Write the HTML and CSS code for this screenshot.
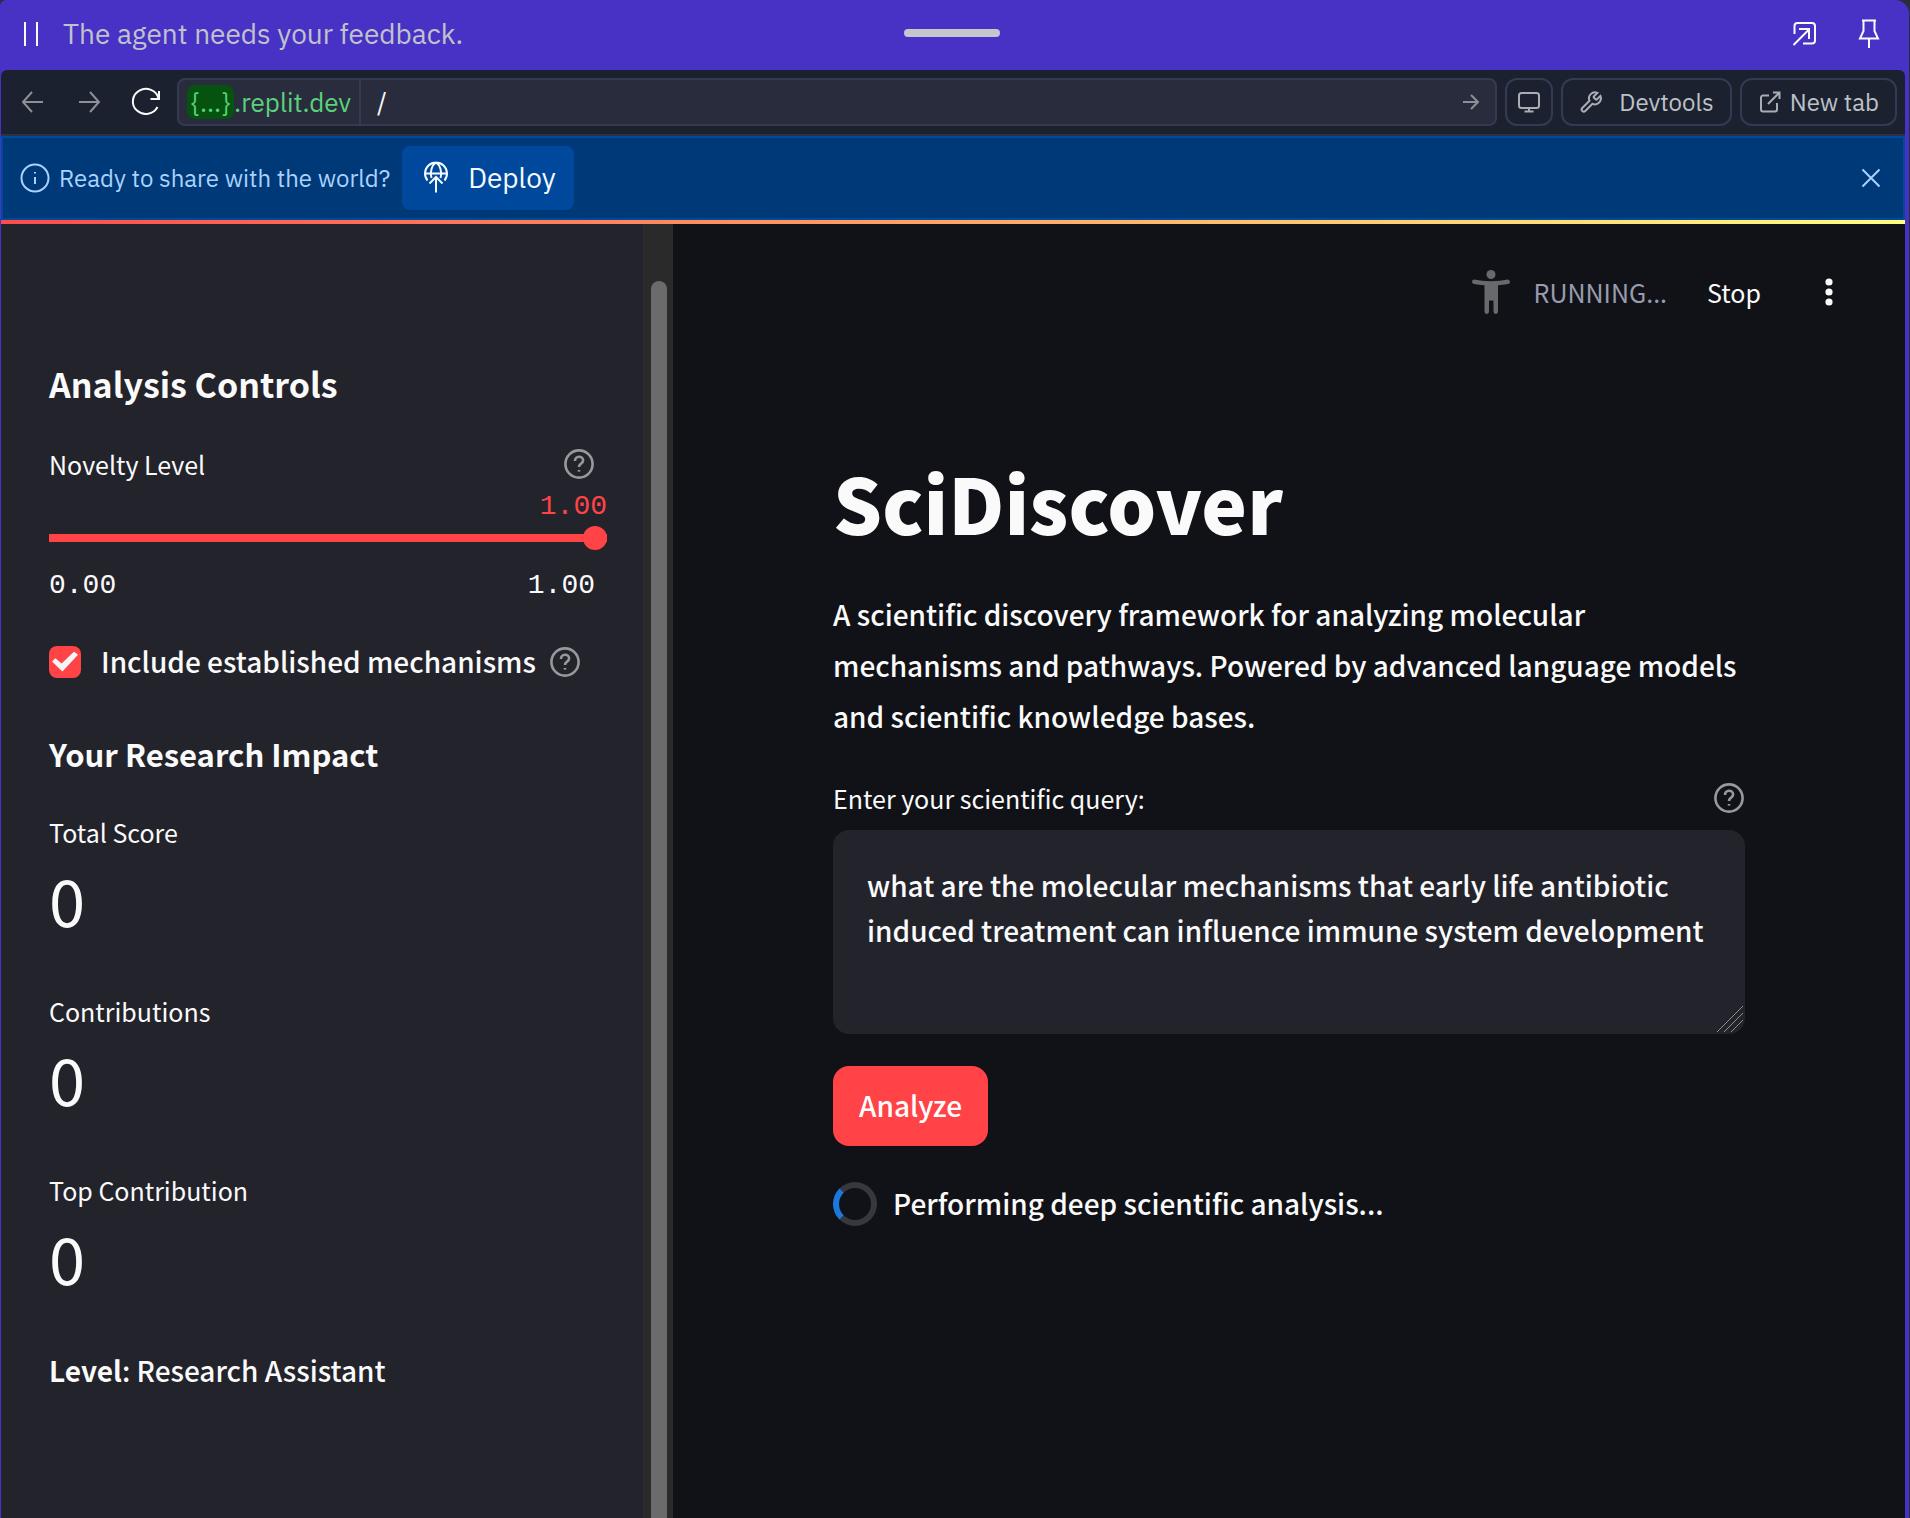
FILE: index.html
```html
<!DOCTYPE html>
<html lang="en">
<head>
<meta charset="utf-8">
<title>SciDiscover</title>
<link rel="stylesheet" href="styles.css">
</head>
<body>
<svg class="defs" width="0" height="0" aria-hidden="true">
  <symbol id="help" viewBox="0 0 30 30">
    <circle cx="15" cy="15" r="13.6"/>
    <path d="M11 12c0-2.600 1.700-4.200 4-4.200s4.100 1.500 4.100 3.700c0 2.900-4.100 3.200-4.100 6.500"/>
    <path d="M15 21v1.600"/>
  </symbol>
</svg>
<div class="window">
  <header class="agent-bar">
    <div class="agent-status">
      <svg class="icon" width="24" height="24" viewBox="0 0 24 24" aria-hidden="true"><path d="M6 0v24M18 0v24"/></svg>
      <p class="agent-text">The agent needs your feedback.</p>
    </div>
    <span class="grip"></span>
    <div class="agent-actions">
      <button class="plain" type="button" aria-label="Expand"><svg class="icon" width="32" height="32" viewBox="0 0 32 32"><path d="M5.500 16V8a3 3 0 0 1 3-3h14.500a3 3 0 0 1 3 3v14.500a3 3 0 0 1-3 3H14M4.500 27L19.500 12M10 11h10v10"/></svg></button>
      <button class="plain" type="button" aria-label="Pin"><svg class="icon" width="32" height="32" viewBox="0 0 32 32"><path d="M9 2.500h14M10.500 2.500v10.500l-3.500 7.500h18l-3.500-7.500V2.500M16 20.500V30"/></svg></button>
    </div>
  </header>

  <div class="frame">
    <nav class="toolbar">
      <button class="plain muted" type="button" aria-label="Back"><svg class="icon" width="32" height="32" viewBox="0 0 32 32"><path d="M26 16H6M15 6L6 16l9 10"/></svg></button>
      <button class="plain muted" type="button" aria-label="Forward"><svg class="icon" width="32" height="32" viewBox="0 0 32 32"><path d="M6 16h20M17 6l9 10-9 10"/></svg></button>
      <button class="plain reload" type="button" aria-label="Reload"><svg class="icon" width="32" height="32" viewBox="0 0 32 32"><path d="M30 5v8h-8.500M29.500 12.500A13 12.500 0 1 0 28.500 21"/></svg></button>
      <div class="address">
        <span class="domain"><span class="sub">{...}</span>.replit.dev</span>
        <input class="path" type="text" value="/" aria-label="Path">
        <button class="plain muted go" type="button" aria-label="Go"><svg class="icon" width="24" height="24" viewBox="0 0 24 24"><path d="M4 12h15M12 5l7 7-7 7"/></svg></button>
      </div>
      <button class="tool square" type="button" aria-label="Screen size"><svg class="icon" width="24" height="24" viewBox="0 0 24 24"><rect x="2" y="3" width="20" height="15" rx="2.500"/><path d="M12 18v3.500M7.500 21.500h9"/></svg></button>
      <button class="tool wide" type="button"><svg class="icon" width="24" height="24" viewBox="0 0 24 24"><path d="M15 6.300a1 1 0 0 0 0 1.400l1.600 1.600a1 1 0 0 0 1.400 0l3.400-3.400a6 6 0 0 1-7.900 7.900l-7.200 7.200a2.120 2.120 0 0 1-3-3l7.200-7.200a6 6 0 0 1 7.900-7.900z"/></svg>Devtools</button>
      <button class="tool" type="button"><svg class="icon" width="24" height="24" viewBox="0 0 24 24"><path d="M19 13v6.500a2 2 0 0 1-2 2H5a2 2 0 0 1-2-2v-12a2 2 0 0 1 2-2h6M15 2.500h6.500V9M21.500 2.500L10 14"/></svg>New tab</button>
    </nav>

    <div class="banner">
      <svg class="icon" width="32" height="32" viewBox="0 0 32 32" aria-hidden="true"><circle cx="16" cy="16" r="13.500"/><path d="M16 15v7M16 10v1.500"/></svg>
      <p class="banner-text">Ready to share with the world?</p>
      <button class="deploy" type="button"><svg class="icon" width="32" height="32" viewBox="0 0 32 32"><path d="M7.500 19.500a11 11 0 1 1 17 0M5 12.500h22M11.500 17C9.500 11 12 4 16 1.500C20 4 22.500 11 20.500 17M16 31.500V16M9.500 22.500L16 16l6.500 6.500"/></svg>Deploy</button>
      <button class="plain close" type="button" aria-label="Close"><svg class="icon" width="24" height="24" viewBox="0 0 24 24"><path d="M3.500 3.500l17 17M20.500 3.500l-17 17"/></svg></button>
    </div>

    <div class="rainbow"></div>

    <div class="app">
      <aside class="sidebar">
        <h2 class="h-controls">Analysis Controls</h2>
        <div class="label-row">
          <label for="novelty">Novelty Level</label>
          <svg class="help" width="30" height="30" aria-hidden="true"><use href="#help"/></svg>
        </div>
        <div class="slider">
          <output class="value" for="novelty">1.00</output>
          <input id="novelty" type="range" min="0" max="1" step="0.01" value="1">
          <div class="ticks"><span>0.00</span><span>1.00</span></div>
        </div>
        <div class="check-row">
          <input id="established" type="checkbox" checked>
          <label for="established">Include established mechanisms</label>
          <svg class="help" width="30" height="30" aria-hidden="true"><use href="#help"/></svg>
        </div>
        <h3 class="h-impact">Your Research Impact</h3>
        <dl class="metrics">
          <div class="metric"><dt>Total Score</dt><dd>0</dd></div>
          <div class="metric"><dt>Contributions</dt><dd>0</dd></div>
          <div class="metric"><dt>Top Contribution</dt><dd>0</dd></div>
        </dl>
        <p class="level"><strong>Level</strong>: Research Assistant</p>
      </aside>
      <div class="scroll-track"><div class="scroll-thumb"></div></div>

      <main class="main">
        <div class="status">
          <svg class="runner" width="38" height="44" viewBox="0 0 38 44" aria-hidden="true"><circle cx="19" cy="4.500" r="4.500"/><path d="M2 9.500Q10 11.300 19 11.300T36 9.500Q38 10 38 12T36 14Q31 15 26 15.300V42Q25.500 44 23.800 44T21.500 42V30.500H17V42Q16.500 44 14.700 44T12.500 42V15.300Q7 15 2 14Q0 13.500 0 11.800T2 9.500Z"/></svg>
          <span class="running">RUNNING...</span>
          <button class="plain stop" type="button">Stop</button>
          <button class="plain more" type="button" aria-label="Menu"><svg width="32" height="32" viewBox="0 0 32 32"><circle cx="16" cy="6" r="3.600"/><circle cx="16" cy="16" r="3.600"/><circle cx="16" cy="26" r="3.600"/></svg></button>
        </div>
        <div class="content">
          <h1>SciDiscover</h1>
          <p class="intro">A scientific discovery framework for analyzing molecular mechanisms and pathways. Powered by advanced language models and scientific knowledge bases.</p>
          <div class="label-row">
            <label for="query">Enter your scientific query:</label>
            <svg class="help" width="30" height="30" aria-hidden="true"><use href="#help"/></svg>
          </div>
          <div class="query-box">
            <textarea id="query">what are the molecular mechanisms that early life antibiotic induced treatment can influence immune system development</textarea>
            <svg class="resizer" width="28" height="28" viewBox="0 0 28 28" aria-hidden="true"><path d="M1 27L27 1M8 27L27 8M15 27L27 15"/></svg>
          </div>
          <button class="analyze" type="button">Analyze</button>
          <div class="progress"><span class="spinner"></span><span class="progress-text">Performing deep scientific analysis...</span></div>
        </div>
      </main>
    </div>
  </div>
</div>
</body>
</html>
```

FILE: styles.css
```css
* { box-sizing: border-box; }

body {
  margin: 0;
  background: #2b2d3a;
  color: #fafafa;
  font-family: "Noto Sans CJK SC", "Noto Sans", sans-serif;
  font-size: 28px;
  font-weight: 500;
}

h1, h2, h3, p, dl, dd { margin: 0; }

button, input, textarea { font: inherit; color: inherit; }

button { cursor: pointer; }

.defs { position: absolute; }

.window {
  display: flex;
  flex-direction: column;
  min-height: 100vh;
  margin-right: 1px;
  background: #4832c5;
  border-radius: 6px 14px 0 0;
}

.icon {
  flex: none;
  fill: none;
  stroke: currentColor;
  stroke-width: 2;
}

.plain {
  display: flex;
  align-items: center;
  justify-content: center;
  padding: 0;
  border: 0;
  background: none;
}

.muted { color: #8c9196; }

/* Agent bar */
.agent-bar {
  display: grid;
  grid-template-columns: 1fr auto 1fr;
  align-items: center;
  height: 70px;
  padding: 0 24px 3px 19px;
  font-family: "IBM Plex Sans", Roboto, sans-serif;
  font-weight: 400;
}

.agent-status {
  display: flex;
  align-items: center;
  gap: 20px;
}

.agent-text {
  color: #c0c2cc;
  font-size: 28px;
  line-height: 36px;
}

.grip {
  width: 96px;
  height: 8px;
  margin-bottom: 2px;
  border-radius: 4px;
  background: #c2c8cc;
}

.agent-actions {
  display: flex;
  justify-content: flex-end;
  gap: 32px;
}

/* Browser frame */
.frame {
  display: flex;
  flex: 1;
  flex-direction: column;
  margin: 0 4px 0 1px;
}

.toolbar {
  display: flex;
  align-items: center;
  gap: 8px;
  height: 66px;
  padding: 0 8px;
  border-bottom: 2px solid #2b3245;
  border-radius: 6px 6px 0 0;
  background: #1c2130;
  font-family: "IBM Plex Sans", Roboto, sans-serif;
  font-size: 24px;
  font-weight: 400;
}

.toolbar > .plain { width: 48px; }

.address {
  display: flex;
  flex: 1;
  align-items: center;
  height: 48px;
  border: 2px solid #353a52;
  border-radius: 8px;
  background: #282c3c;
  font-size: 26px;
}

.domain {
  display: flex;
  align-items: center;
  height: 44px;
  padding: 0 8px;
  border-right: 2px solid #353a52;
  color: #5ad27a;
}

.sub {
  padding: 0 4px;
  border-radius: 8px;
  background: #06530f;
  line-height: 34px;
}

.path {
  flex: 1;
  min-width: 0;
  padding: 0 16px;
  border: 0;
  outline: 0;
  background: none;
  color: #f5f7fa;
}

.go { width: 48px; }

.tool {
  display: flex;
  align-items: center;
  justify-content: center;
  gap: 8px;
  height: 48px;
  padding: 0 16px;
  border: 2px solid #353a52;
  border-radius: 12px;
  background: none;
  color: #bcc2c8;
}

.tool .icon { color: #a9adb5; }

.tool.wide { gap: 16px; }

.tool.square { width: 48px; padding: 0; }

/* Deploy banner */
.banner {
  display: flex;
  align-items: center;
  height: 84px;
  padding: 0 20px 0 16px;
  border: 2px solid #004a9c;
  background: #003978;
  color: #a8d2ff;
  font-family: "IBM Plex Sans", Roboto, sans-serif;
  font-weight: 400;
}

.banner-text {
  margin: 0 12px 0 8px;
  font-size: 24px;
}

.deploy {
  display: flex;
  align-items: center;
  gap: 16px;
  height: 64px;
  padding: 0 18px 2px;
  border: 0;
  border-radius: 8px;
  background: #00489c;
  color: #f5f9fc;
  font-size: 28px;
}

.close { margin-left: auto; }

.rainbow {
  height: 4px;
  background: linear-gradient(90deg, #ff4b4b, #fffd80);
}

/* App */
.app {
  display: flex;
  flex: 1;
}

.sidebar {
  width: 642px;
  padding: 130px 48px 48px;
  background: #23232c;
}

.h-controls {
  font-size: 34px;
  line-height: 60px;
}

.label-row {
  display: flex;
  align-items: center;
  justify-content: space-between;
  height: 36px;
  padding-right: 1px;
  font-size: 25px;
  font-weight: 400;
  line-height: 36px;
}

.help {
  flex: none;
  fill: none;
  stroke: #97989d;
  stroke-width: 2.600;
}

.sidebar .label-row { margin-top: 32px; }

.slider {
  width: 558px;
  font-family: "Liberation Mono", monospace;
  font-size: 28px;
  font-weight: 400;
}

.value {
  display: block;
  padding-top: 6px;
  color: #ff4346;
  line-height: 38px;
  text-align: right;
}

.slider input {
  display: block;
  width: 100%;
  height: 24px;
  margin: 0;
  appearance: none;
  background: linear-gradient(#ff4346, #ff4346) center / 100% 8px no-repeat;
  border-radius: 4px;
}

.slider input::-webkit-slider-thumb {
  width: 24px;
  height: 24px;
  appearance: none;
  border-radius: 50%;
  background: #ff4346;
}

.ticks {
  display: flex;
  justify-content: space-between;
  padding: 17px 12px 0 0;
  line-height: 38px;
}

.check-row {
  display: flex;
  align-items: center;
  margin-top: 36px;
  line-height: 40px;
  white-space: nowrap;
}

.check-row label { padding-bottom: 1px; }

.check-row input {
  display: grid;
  flex: none;
  place-content: center;
  width: 32px;
  height: 32px;
  margin: 0 20px 0 0;
  appearance: none;
  border-radius: 8px;
  background: #ff4346;
}

.check-row input:checked::before {
  content: "";
  width: 26px;
  height: 20px;
  background: #f5f5f7;
  clip-path: polygon(0 50%, 13% 34%, 37% 60%, 85% 0, 100% 16%, 40% 100%);
}

.check-row .help { margin-left: 14px; }

.h-impact {
  margin-top: 46px;
  font-size: 31px;
  line-height: 52px;
}

.metrics {
  margin-top: 34px;
  font-weight: 400;
}

.metric { height: 179px; }

.metric dt {
  font-size: 25px;
  line-height: 36px;
}

.metric dd {
  font-size: 65px;
  line-height: 98px;
}

.level { line-height: 38px; }

.level strong { font-weight: 700; }

.scroll-track {
  width: 30px;
  padding: 57px 6px 0 8px;
  background: #2a2a2a;
}

.scroll-thumb {
  height: 100%;
  border-radius: 8px 8px 0 0;
  background: #6b6b6b;
}

.main {
  flex: 1;
  background: #111217;
}

.status {
  display: flex;
  align-items: center;
  justify-content: flex-end;
  height: 136px;
  padding-right: 60px;
  font-size: 25px;
  font-weight: 400;
}

.runner { fill: #68696d; }

.running {
  margin: 0 40px 0 24px;
  color: #989cae;
}

.more {
  margin-left: 52px;
  fill: #fafafa;
}

.content {
  display: flex;
  flex-direction: column;
  align-items: stretch;
  padding: 91px 160px 0;
}

h1 {
  font-size: 77px;
  font-weight: 900;
  line-height: 102px;
}

.intro {
  margin: 36px 0 38px;
  line-height: 51px;
}

.query-box {
  position: relative;
  margin-top: 14px;
}

textarea {
  display: block;
  width: 100%;
  height: 204px;
  padding: 33px 24px 24px 34px;
  border: 0;
  border-radius: 16px;
  outline: 0;
  background: #23232c;
  line-height: 45px;
  resize: none;
}

.resizer {
  position: absolute;
  right: 1px;
  bottom: 1px;
  fill: none;
  stroke: #8b8b90;
  stroke-width: 1;
}

.analyze {
  align-self: flex-start;
  height: 80px;
  margin-top: 32px;
  padding: 0 26px 2px;
  border: 0;
  border-radius: 16px;
  background: #ff4346;
  color: #fff;
}

.progress {
  display: flex;
  align-items: center;
  gap: 16px;
  margin-top: 36px;
  line-height: 40px;
}

.progress-text { padding-bottom: 2px; }

.spinner {
  width: 44px;
  height: 44px;
  border: 6px solid #36383e;
  border-left-color: #1c78dd;
  border-radius: 50%;
}
```
